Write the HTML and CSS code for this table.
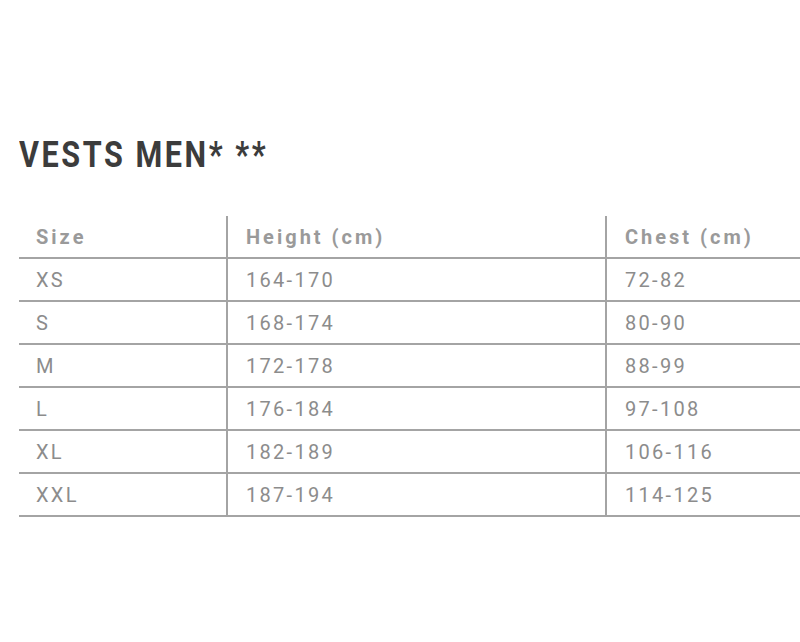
FILE: index.html
```html
<!DOCTYPE html>
<html>
<head>
<meta charset="utf-8">
<link rel="stylesheet" href="styles.css">
</head>
<body>
<div class="page">
  <h1 class="title">VESTS MEN* **</h1>
  <table class="sizes">
    <colgroup>
      <col class="c1"><col class="c2"><col class="c3">
    </colgroup>
    <thead>
      <tr><th>Size</th><th>Height (cm)</th><th>Chest (cm)</th></tr>
    </thead>
    <tbody>
      <tr><td>XS</td><td>164-170</td><td>72-82</td></tr>
      <tr><td>S</td><td>168-174</td><td>80-90</td></tr>
      <tr><td>M</td><td>172-178</td><td>88-99</td></tr>
      <tr><td>L</td><td>176-184</td><td>97-108</td></tr>
      <tr><td>XL</td><td>182-189</td><td>106-116</td></tr>
      <tr><td>XXL</td><td>187-194</td><td>114-125</td></tr>
    </tbody>
  </table>
</div>
</body>
</html>
```
FILE: styles.css
```css
html, body {
  margin: 0;
  padding: 0;
  background: #fff;
  overflow: hidden;
}
.page {
  width: 800px;
  height: 642px;
  padding: 136px 0 0 19px;
  box-sizing: border-box;
  overflow: hidden;
  font-family: Roboto, "Liberation Sans", sans-serif;
}
.title {
  margin: 0 0 42px 0;
  font-size: 36px;
  line-height: 38px;
  font-weight: 700;
  color: #3c3c3c;
  letter-spacing: 3px;
  transform: scaleX(0.85);
  transform-origin: left center;
}
.sizes {
  border-collapse: collapse;
  width: 800px;
  table-layout: fixed;
}
.c1 { width: 208px; }
.c2 { width: 379px; }
.c3 { width: 213px; }
.sizes th, .sizes td {
  text-align: left;
  height: 41px;
  padding: 0 0 0 17px;
  border-bottom: 2px solid #a4a4a4;
  font-size: 20px;
  letter-spacing: 2.3px;
  color: #8c8c8c;
}
.sizes th {
  font-weight: 700;
  color: #9a9a9a;
  letter-spacing: 3px;
}
.sizes th + th, .sizes td + td {
  border-left: 2px solid #a4a4a4;
  padding-left: 18px;
}
```
